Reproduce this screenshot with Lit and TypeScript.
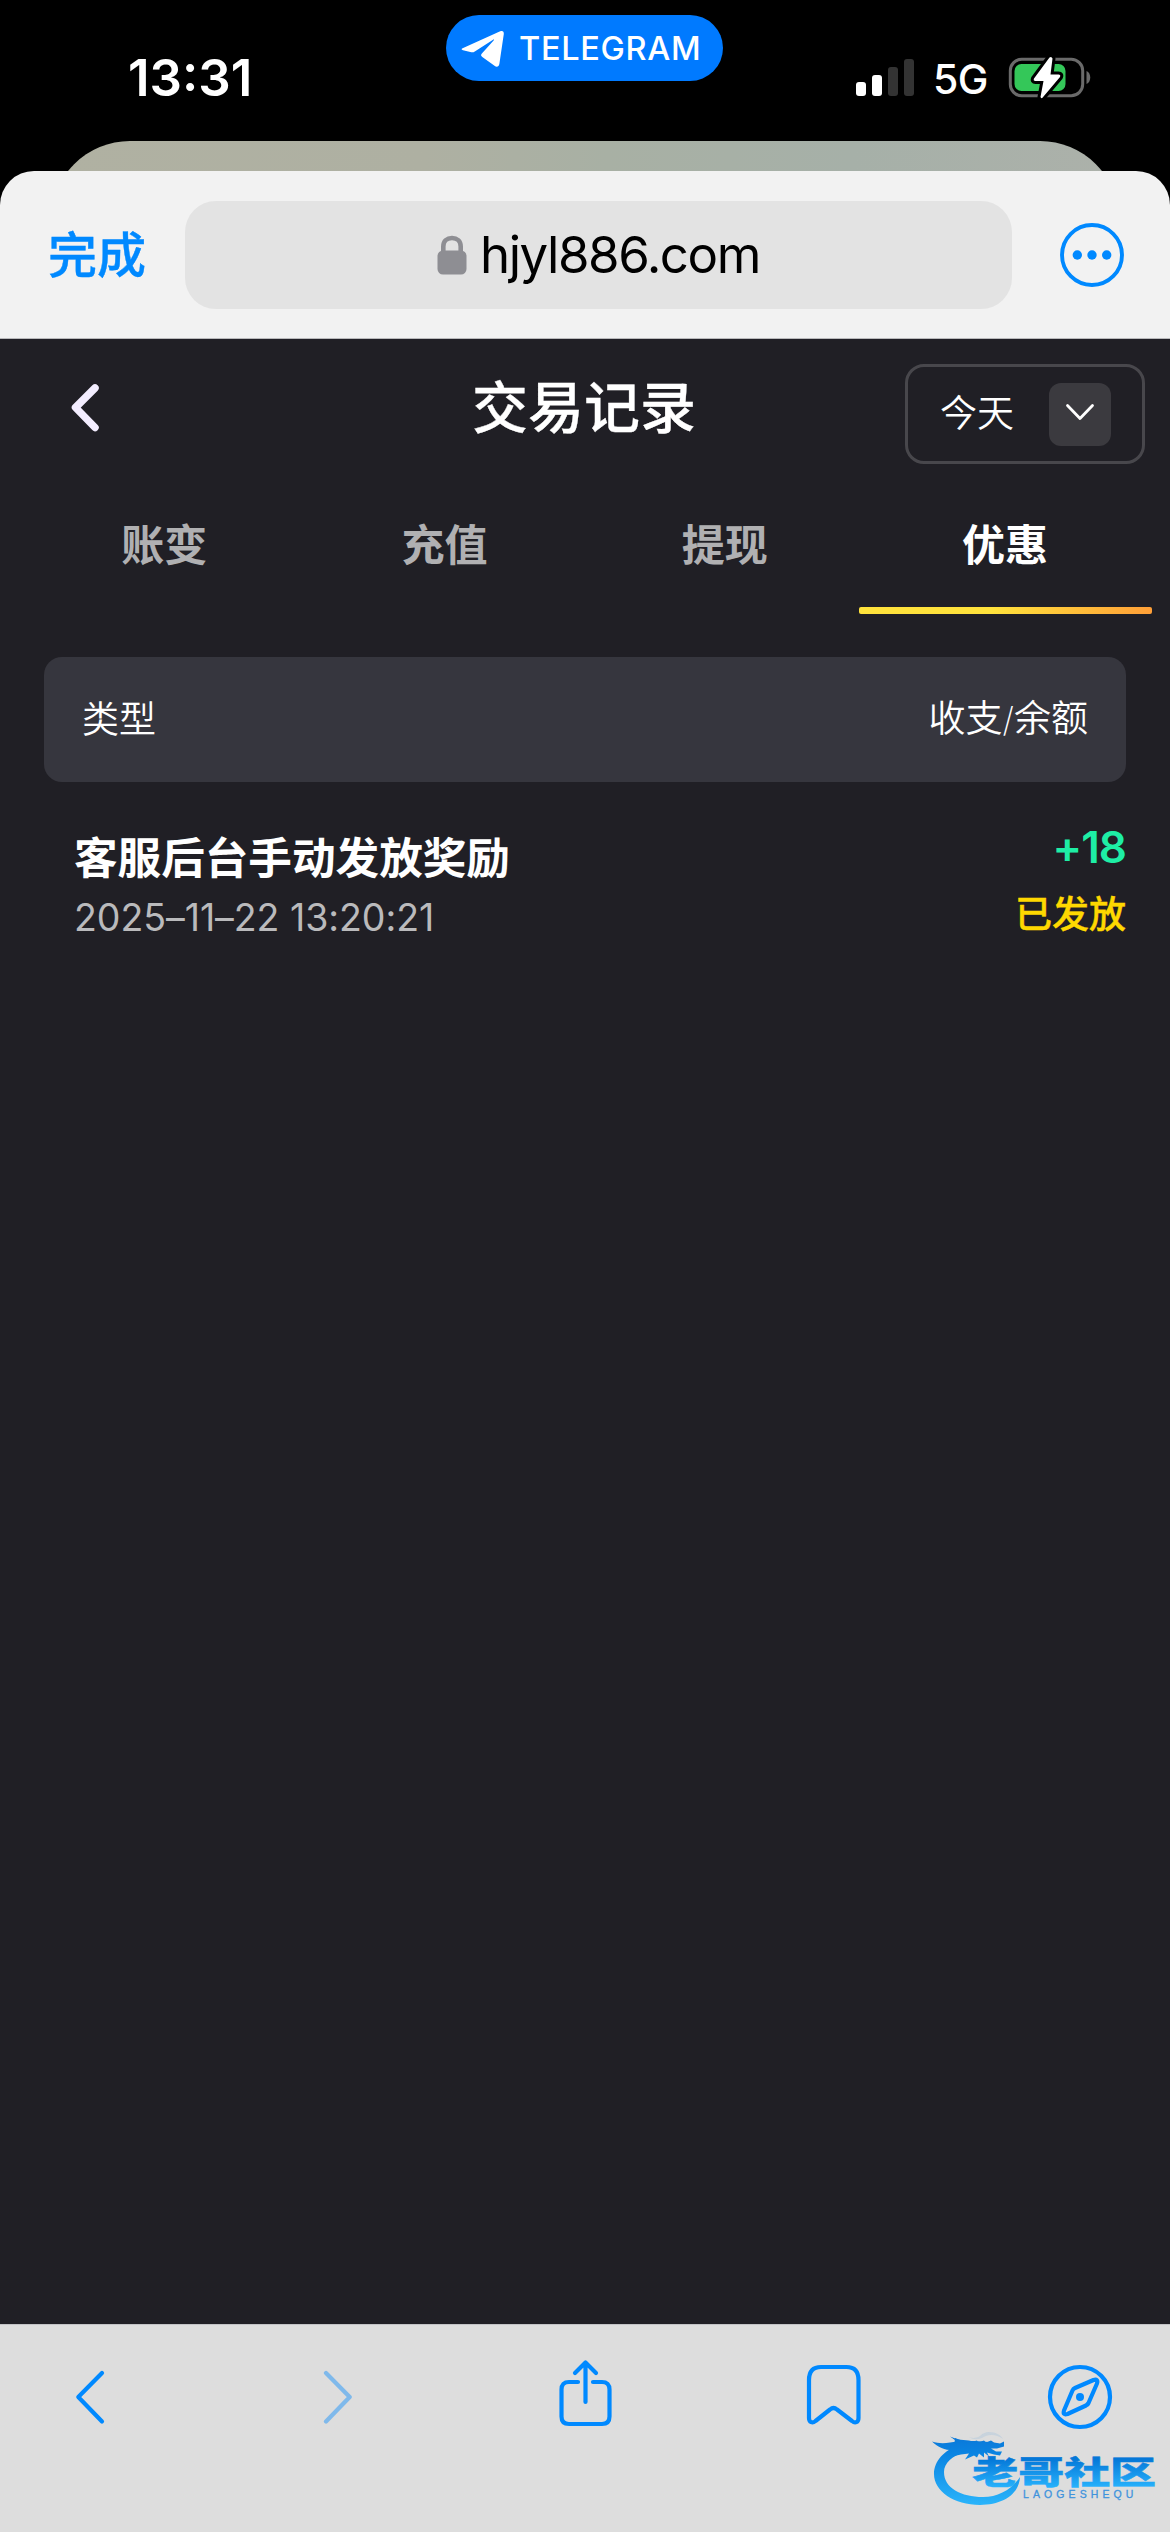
import { LitElement, html, css, svg } from "lit";
import { customElement, property } from "lit/decorators.js";
import { classMap } from "lit/directives/class-map.js";

const latin = css`Inter, "Noto Sans CJK SC", sans-serif`;

@customElement("status-bar")
class StatusBar extends LitElement {
  static styles = css`
    :host { display: block; height: 141px; background: #000; color: #fff; font-family: ${latin}; }
    .bar { display: grid; grid-template-columns: 446px 277px 1fr; height: 141px; align-items: start; }
    .clock { margin: 48px 0 0 128px; font-size: 51px; line-height: 60px; font-weight: 600; letter-spacing: 0; white-space: nowrap; }
    .pill { display: flex; align-items: center; margin-top: 15px; height: 66px; border-radius: 33px; background: #007aff; }
    .plane { width: 44px; height: 38px; margin: 1px 0 0 14px; display: block; }
    .pill-text { margin: 1px 0 0 15px; font-size: 32.5px; line-height: 40px; font-weight: 500; letter-spacing: 0.700px; white-space: nowrap; }
    .right { display: flex; align-items: flex-start; padding-left: 133px; }
    .signal { display: block; width: 58px; height: 37px; margin-top: 59px; }
    .net { margin: 54px 0 0 19px; width: 74px; font-size: 41px; line-height: 50px; font-weight: 500; letter-spacing: -0.5px; }
    .battery { display: block; width: 84px; height: 44px; margin: 56px 0 0 0; }
  `;
  render() {
    return html`<div class="bar">
      <div class="clock">13:31</div>
      <div class="pill">
        <svg class="plane" viewBox="0 0 44 38"><path fill="#fff" d="M2.6 18.2 40.2 1.3c2.4-1 3.8.2 3.6 2.6L39.4 33.8c-.5 2.9-2.6 3.6-4.9 2L22.3 27c-1.6-1.2-1.6-2.2-.2-3.7L33.6 10.600c.9-1 .2-1.400-.9-.7L14.800 21.500c-1.500 1-2.700 1-4.500.500L3 20.200c-1.700-.4-1.900-1.300-.4-2z"/></svg>
        <span class="pill-text">TELEGRAM</span>
      </div>
      <div class="right">
        <svg class="signal" viewBox="0 0 58 37">
          <rect x="0" y="23" width="10" height="14" rx="3" fill="#fff"/>
          <rect x="16" y="16" width="10" height="21" rx="3" fill="#fff"/>
          <rect x="32" y="8" width="10" height="29" rx="3" fill="#333"/>
          <rect x="48" y="0" width="10" height="37" rx="3" fill="#333"/>
        </svg>
        <span class="net">5G</span>
        <svg class="battery" viewBox="0 0 84 44">
          <rect x="3.300" y="3.300" width="72.400" height="36.400" rx="11.500" fill="none" stroke="#6a6a6a" stroke-width="3"/>
          <path d="M79.500 15c5 2 5 11 0 13z" fill="#6a6a6a"/>
          <rect x="7.500" y="8" width="51" height="27" rx="7" fill="#34c759"/>
          <path d="M42.500 1.500 27 22.500q-1 2.500 1.500 2.500h8L33.500 41q.8 2 2.200.5L53 21q1-2.500-1.500-2.500h-8l2-16q-1-2.500-3-1z" fill="#fff" stroke="#000" stroke-width="6" stroke-linejoin="round" paint-order="stroke"/>
        </svg>
      </div>
    </div>`;
  }
}

@customElement("sheet-header")
class SheetHeader extends LitElement {
  static styles = css`
    :host { display: block; background: #000; font-family: ${latin}; }
    .behind { height: 30px; overflow: hidden; padding: 0 51px; }
    .card { height: 160px; border-radius: 79px; background: linear-gradient(90deg, #b0b1a2 0, #aeb0a2 35%, #a8b0a4 52%, #a6b0a8 75%, #acb1aa 100%); }
    .sheet { display: flex; align-items: center; box-sizing: border-box; height: 168px; border-bottom: 1px solid #b9b9bb; border-radius: 34px 34px 0 0; background: #f2f2f2; }
    .done { width: 137px; padding: 2px 0 0 48px; font-size: 49px; line-height: 60px; font-weight: 500; -webkit-text-stroke: 0.400px #0089ff; color: #0089ff; white-space: nowrap; }
    .field { display: flex; align-items: center; box-sizing: border-box; width: 827px; height: 108px; padding-left: 252px; border-radius: 31px; background: #e3e3e3; }
    .lock { display: block; width: 30px; height: 40px; }
    .url { margin-left: 13px; font-size: 51px; line-height: 64px; letter-spacing: -1.450px; color: #000; white-space: nowrap; }
    .more { display: block; width: 64px; height: 64px; margin-left: 48px; }
  `;
  render() {
    return html`<div class="behind"><div class="card"></div></div>
      <div class="sheet">
        <span class="done">完成</span>
        <div class="field">
          <svg class="lock" viewBox="0 0 30 40">
            <path d="M6.300 18V11.500C6.300 5.800 10 3 15 3s8.700 2.800 8.700 8.500V18" fill="none" stroke="#8e8e93" stroke-width="4.600"/>
            <rect x=".5" y="15.500" width="29" height="24" rx="5.500" fill="#8e8e93"/>
          </svg>
          <span class="url">hjyl886.com</span>
        </div>
        <svg class="more" viewBox="0 0 64 64">
          <circle cx="32" cy="32" r="30" fill="none" stroke="#0089ff" stroke-width="3.900"/>
          <g fill="#0089ff"><circle cx="17.300" cy="32" r="4.700"/><circle cx="32" cy="32" r="4.700"/><circle cx="46.700" cy="32" r="4.700"/></g>
        </svg>
      </div>`;
  }
}

interface LedgerEntry { title: string; time: string; amount: string; state: string; }

@customElement("record-page")
class RecordPage extends LitElement {
  @property({ type: Number }) active = 3;
  @property({ attribute: false }) tabs = ["账变", "充值", "提现", "优惠"];
  @property({ attribute: false }) entries: LedgerEntry[] = [
    { title: "客服后台手动发放奖励", time: "2025–11–22 13:20:21", amount: "+18", state: "已发放" },
  ];
  static styles = css`
    :host { display: block; flex: 1; background: #201f25; color: #fff; font-family: ${latin}; }
    .top { display: grid; grid-template-columns: 460px 1fr 240px; padding: 0 25px 0 0; height: 145px; align-items: start; }
    .back { display: block; width: 30px; height: 48px; margin: 45px 0 0 70px; }
    .title { margin-top: 33px; padding-left: 12px; font-size: 56px; line-height: 72px; font-weight: 500; -webkit-text-stroke: 0.300px #fff; white-space: nowrap; }
    .period { display: flex; align-items: center; box-sizing: border-box; height: 100px; margin-top: 25px; padding: 0 31px 0 32px; justify-content: space-between; border: 3px solid #48474c; border-radius: 19px; font-size: 37px; line-height: 50px; }
    .period-box { display: flex; align-items: center; justify-content: center; width: 62px; height: 63px; border-radius: 12px; background: #3b3a3f; }
    .period-icon { display: block; width: 30px; height: 20px; margin-top: -4px; }
    .period-text { font-weight: 350; }
    .tabs { display: grid; grid-template-columns: repeat(4, 280.300px); margin-left: 24px; height: 130px; }
    .tab { display: flex; flex-direction: column; align-items: center; justify-content: space-between; }
    .tab-text { margin-top: 30px; font-size: 43px; line-height: 62px; font-weight: 600; color: #b0b0b2; }
    .on .tab-text { color: #fff; }
    .line { width: 293px; height: 7px; border-radius: 2px; }
    .on .line { background: linear-gradient(90deg, #ffe23c 0, #ffe23c 45%, #ff9f38 100%); }
    .head { display: flex; align-items: center; justify-content: space-between; height: 125px; margin: 43px 44px 0; padding: 0 38px; border-radius: 18px; background: #36363e; font-size: 37px; line-height: 50px; font-weight: 350; }
    .head-text { margin-top: 0; }
    .slash { font-size: 34px; font-weight: 200; }
    .row { display: flex; justify-content: space-between; padding: 0 44px 0 74px; }
    .left { padding-top: 46px; }
    .name { font-size: 43.600px; line-height: 62px; font-weight: 600; white-space: nowrap; }
    .time { margin-top: 4px; font-size: 37.500px; line-height: 48px; font-weight: 380; letter-spacing: -0.050px; color: #bababc; white-space: nowrap; }
    .right { display: flex; flex-direction: column; align-items: flex-end; padding-top: 37px; }
    .amount { font-size: 44px; line-height: 56px; font-weight: 600; letter-spacing: -1px; color: #1eeea5; }
    .state { margin-top: 13px; font-size: 37px; line-height: 54px; font-weight: 500; -webkit-text-stroke: 0.400px #ffd800; color: #ffd800; }
  `;
  render() {
    return html`
      <div class="top">
        <svg class="back" viewBox="0 0 30 48"><path d="M25 4 5.500 23.500 25 43.500" fill="none" stroke="#f3edff" stroke-width="7.500" stroke-linecap="round" stroke-linejoin="round"/></svg>
        <div class="title">交易记录</div>
        <div class="period">
          <span class="period-text">今天</span>
          <span class="period-box"><svg class="period-icon" viewBox="0 0 30 20"><path d="M2.500 3.500 15 16.500 27.500 3.500" fill="none" stroke="#fff" stroke-width="2.800" stroke-linecap="round" stroke-linejoin="round"/></svg></span>
        </div>
      </div>
      <div class="tabs">
        ${this.tabs.map((t, i) => html`<div class=${classMap({ tab: true, on: i === this.active })}>
          <span class="tab-text">${t}</span><span class="line"></span></div>`)}
      </div>
      <div class="head"><span class="head-text">类型</span><span class="head-text">收支<span class="slash">/</span>余额</span></div>
      ${this.entries.map((e) => html`<div class="row">
        <div class="left"><div class="name">${e.title}</div><div class="time">${e.time}</div></div>
        <div class="right"><div class="amount">${e.amount}</div><div class="state">${e.state}</div></div>
      </div>`)}
    `;
  }
}

@customElement("brand-mark")
class BrandMark extends LitElement {
  static styles = css`
    :host { display: block; width: 226px; height: 80px; }
    .mark { display: block; width: 226px; height: 80px; overflow: visible; }
    .cn { font-family: "Noto Sans CJK SC", sans-serif; font-weight: 900; font-size: 31.500px; }
    .en { font-family: "Liberation Sans", Arial, sans-serif; font-size: 10.500px; font-weight: 400; letter-spacing: 4.100px; }
  `;
  render() {
    return html`<svg class="mark" viewBox="0 0 226 80">
      <defs>
        <linearGradient id="ring" x1="0" y1="8" x2="0" y2="76" gradientUnits="userSpaceOnUse"><stop offset="0" stop-color="#0a78d8"/><stop offset=".25" stop-color="#0a84e2"/><stop offset="1" stop-color="#2ab4fb"/></linearGradient>
        <linearGradient id="glyph" x1="0" y1="30" x2="0" y2="59" gradientUnits="userSpaceOnUse"><stop offset="0" stop-color="#0578d8"/><stop offset="1" stop-color="#28b3fd"/></linearGradient>
      </defs>
      <g fill="url(#ring)">
        <path d="M30 16C14 21 4 32 4 45c0 17 20 31 46 31 22 0 39-10 40-28-9 13-22 20-37 20-22 0-39-9-39-25 0-9 8-16 22-21z"/>
        <path d="M2 12.500c6 2 12 2 18 1l7-1-7-5 8 3 11 1 4 1 4-1 1 2 6-2 2 2 5-2 3 2 6 1 4-2v5l-7 2-6 0 5 3 6 0-2 4-6-1-7-2 2 4-5-4 0 5-5-4-2 4-3-2-9 4 4-6-8 1-9 2 9-8c-9 4-21 1-29-7z"/>
        <path d="M25 9l8 3 12 0 14 1 10 2-8 4-18 3-14 2-5-5z"/>
        <path d="M38 7c5 4 12 1 14-2 8-5 19 0 21 5-7-5-15-5-21-1-5 2-10 2-14-2z" opacity=".1"/>
      </g>
      <g transform="scale(1.460 1)"><text class="cn" x="28.900" y="55.300" fill="url(#glyph)" stroke="url(#glyph)" stroke-width=".5">老哥社区</text></g>
      <text class="en" x="93" y="69.300" fill="#3f93dc" stroke="#3f93dc" stroke-width=".3">LAOGESHEQU</text>
    </svg>`;
  }
}

@customElement("browser-toolbar")
class BrowserToolbar extends LitElement {
  static styles = css`
    :host { display: block; position: relative; height: 208px; background: #ddd; }
    .tools { display: flex; justify-content: space-between; align-items: flex-start; box-sizing: border-box; height: 208px; padding: 31px 48px 0; border-top: 1px solid #c2c2c5; }
    .tool { display: block; width: 84px; height: 84px; fill: none; stroke: #0089ff; stroke-width: 4.200; stroke-linecap: round; stroke-linejoin: round; }
    .off { opacity: .42; }
    .dot { fill: #0089ff; stroke: none; }
    .brand { position: absolute; left: 930px; top: 105px; }
  `;
  render() {
    const icons = [
      svg`<path d="M54 17 30.300 41 54 65.500"/>`,
      svg`<path d="M30 17 53.700 41 30 65.500"/>`,
      svg`<path d="M35 26h-9q-7.500 0-7.500 7.500v27q0 7.500 7.500 7.500h33q7.500 0 7.500-7.500v-27q0-7.500-7.500-7.500H50M42.500 46V6.500M32 17 42.500 6.500 53 17"/>`,
      svg`<path d="M18 24q0-13 12-13h25.500q12 0 12 13v38c0 4.500-3.500 5.500-6.500 3L46 53.500q-3.500-3-7 0L24.500 65c-3 2.500-6.500 1.500-6.500-3z"/>`,
      svg`<circle cx="42" cy="41" r="30"/><path d="M37 32 55.500 24q5-1.500 3.500 3.500L50.500 47q-.7 1.500-2.500 2.500L29.500 58q-5 1.500-3.500-3.500L34.500 34.500q.7-1.700 2.500-2.500z"/><circle class="dot" cx="42" cy="41" r="4"/>`,
    ];
    return html`<div class="tools">
        ${icons.map((icon, i) => html`<svg class=${classMap({ tool: true, off: i === 1 })} viewBox="0 0 84 84">${icon}</svg>`)}
      </div>
      <brand-mark class="brand"></brand-mark>`;
  }
}

@customElement("app-root")
class AppRoot extends LitElement {
  static styles = css`
    :host { display: flex; flex-direction: column; width: 1170px; height: 2532px; overflow: hidden; background: #201f25; }
  `;
  render() {
    return html`<status-bar></status-bar><sheet-header></sheet-header><record-page></record-page><browser-toolbar></browser-toolbar>`;
  }
}
